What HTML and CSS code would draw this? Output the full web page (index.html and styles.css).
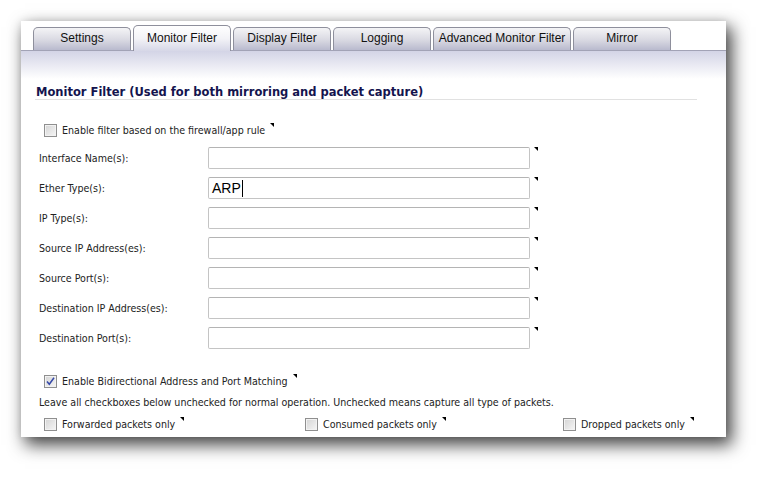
FILE: index.html
```html
<!DOCTYPE html>
<html>
<head>
<meta charset="utf-8">
<link rel="stylesheet" href="styles.css">
</head>
<body>
<div class="panel">
  <div class="tabs">
    <div class="tab">Settings</div>
    <div class="tab active">Monitor Filter</div>
    <div class="tab">Display Filter</div>
    <div class="tab">Logging</div>
    <div class="tab wide">Advanced Monitor Filter</div>
    <div class="tab">Mirror</div>
  </div>
  <div class="content">
    <h2 class="heading">Monitor Filter (Used for both mirroring and packet capture)</h2>
    <div class="cbrow first"><span class="cb"></span><span class="cbtext">Enable filter based on the firewall/app rule</span><span class="mark"></span></div>
    <div class="form">
      <div class="row"><span class="label">Interface Name(s):</span><div class="field"></div><span class="mark"></span></div>
      <div class="row"><span class="label">Ether Type(s):</span><div class="field">ARP<span class="caret"></span></div><span class="mark"></span></div>
      <div class="row"><span class="label">IP Type(s):</span><div class="field"></div><span class="mark"></span></div>
      <div class="row"><span class="label">Source IP Address(es):</span><div class="field"></div><span class="mark"></span></div>
      <div class="row"><span class="label">Source Port(s):</span><div class="field"></div><span class="mark"></span></div>
      <div class="row"><span class="label">Destination IP Address(es):</span><div class="field"></div><span class="mark"></span></div>
      <div class="row"><span class="label">Destination Port(s):</span><div class="field"></div><span class="mark"></span></div>
    </div>
    <div class="cbrow bidir"><span class="cb checked"><svg width="11" height="11" viewBox="0 0 11 11"><path d="M2 5.5 L4.3 8.2 L9 1.8" fill="none" stroke="#3548a8" stroke-width="1.5"/></svg></span><span class="cbtext">Enable Bidirectional Address and Port Matching</span><span class="mark"></span></div>
    <p class="note">Leave all checkboxes below unchecked for normal operation. Unchecked means capture all type of packets.</p>
    <div class="triple">
      <div class="cbrow"><span class="cb"></span><span class="cbtext">Forwarded packets only</span><span class="mark"></span></div>
      <div class="cbrow"><span class="cb"></span><span class="cbtext">Consumed packets only</span><span class="mark"></span></div>
      <div class="cbrow"><span class="cb"></span><span class="cbtext">Dropped packets only</span><span class="mark"></span></div>
    </div>
  </div>
</div>
</body>
</html>
```

FILE: styles.css
```css
html, body {
  margin: 0;
  padding: 0;
  background: #ffffff;
}
body {
  min-height: 479px;
  box-sizing: border-box;
  padding: 21px 0 0 21px;
  font-family: "DejaVu Sans Condensed", "DejaVu Sans", sans-serif;
  font-size: 10.6px;
  color: #222;
}
.panel {
  width: 705px;
  height: 416px;
  background: #fff;
  box-shadow: 5px 7px 16px 1px rgba(0,0,0,0.72), 0 0 8px rgba(0,0,0,0.08);
  overflow: hidden;
}
.tabs {
  display: flex;
  align-items: flex-end;
  gap: 2px;
  height: 29px;
  padding-left: 12px;
  border-bottom: 1px solid #a2a3b6;
  box-sizing: content-box;
}
.tab {
  width: 98px;
  height: 23px;
  box-sizing: border-box;
  border: 1px solid #8e8f9c;
  border-bottom: none;
  border-radius: 5px 5px 0 0;
  background: linear-gradient(#f4f4f6, #d9d9e2 55%, #b9bace);
  font-family: "Liberation Sans", Arial, sans-serif;
  font-size: 12px;
  color: #111;
  text-align: center;
  line-height: 21px;
}
.tab.wide { width: 138px; }
.tab.active {
  height: 26px;
  margin-bottom: -1px;
  line-height: 24px;
  background: linear-gradient(#ffffff, #f3f3f7 50%, #d6d7e7);
  padding-bottom: 1px;
}
.content {
  padding: 34px 29px 0 14px;
  background: linear-gradient(#d3d4e6, #ffffff 28px) no-repeat;
}
.heading {
  margin: 0;
  font-family: "DejaVu Sans", Verdana, sans-serif;
  font-size: 11.5px;
  font-weight: bold;
  line-height: 14px;
  color: #14144e;
  padding-left: 1px;
  border-bottom: 1px solid #e1e1e1;
}
.cbrow {
  display: flex;
  align-items: center;
  height: 16px;
  padding-left: 9px;
}
.cbrow.first { margin-top: 22px; }
.cb {
  width: 13px;
  height: 13px;
  box-sizing: border-box;
  border: 1px solid #8f8f8f;
  background: linear-gradient(135deg, #d4d4d4, #f6f6f6);
  box-shadow: inset 0 0 0 1px #f2f2f2;
  margin-right: 5px;
  display: flex;
  align-items: center;
  justify-content: center;
  flex: none;
}
.cbtext { white-space: nowrap; }
.mark {
  align-self: flex-start;
  width: 0;
  height: 0;
  border-top: 4px solid #000;
  border-left: 4px solid transparent;
  margin-left: 5px;
  flex: none;
}
.cbrow .mark { margin-top: 1px; }
.form { margin-top: 5px; }
.row {
  display: flex;
  align-items: center;
  height: 30px;
  padding-left: 4px;
}
.label { width: 169px; flex: none; }
.field {
  width: 322px;
  height: 22px;
  box-sizing: border-box;
  border: 1px solid #c4c4c4;
  border-top-color: #b4b4b4;
  border-radius: 2px;
  background: #fff;
  font-family: "Liberation Sans", Arial, sans-serif;
  font-size: 14px;
  color: #000;
  padding-left: 3px;
  line-height: 20px;
  display: flex;
  align-items: center;
}
.caret {
  display: inline-block;
  width: 1px;
  height: 17px;
  background: #000;
  margin-left: 1px;
}
.row .mark { margin-top: 4px; margin-left: 4px; }
.cbrow.bidir { margin-top: 20px; }
.note {
  margin: 5px 0 0 4px;
  line-height: 16px;
}
.triple {
  margin-top: 6px;
  display: grid;
  grid-template-columns: 261px 258px auto;
}
```
